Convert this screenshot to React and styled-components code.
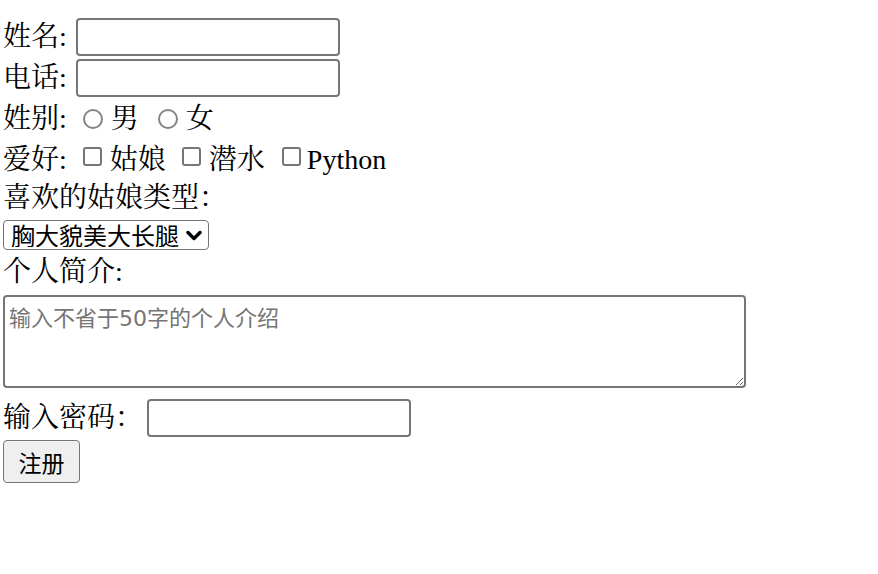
import styled, { createGlobalStyle } from "styled-components";

const GlobalStyle = createGlobalStyle`
  body {
    margin: 0;
    background: #fff;
  }
`;

const Form = styled.form`
  display: flex;
  flex-direction: column;
  align-items: flex-start;
  padding: 16px 3px 0;
  font-family: "Liberation Serif", "Noto Serif CJK SC", "Noto Sans CJK SC", serif;
  font-size: 28px;
  color: #000;
`;

const Line = styled.div`
  display: flex;
  align-items: center;
  height: ${(p) => p.$h}px;
  white-space: nowrap;
`;

const Label = styled.span`
  line-height: 1;
`;

const TextInput = styled.input`
  box-sizing: border-box;
  width: 264px;
  height: 38px;
  margin-left: ${(p) => p.$ml || 9}px;
  border: 2px solid #767676;
  border-radius: 4px;
  padding: 2px 4px;
  font-family: "Noto Sans CJK SC", sans-serif;
  font-size: 23px;
  background: #fff;
  outline: none;
`;

const Radio = styled.input.attrs({ type: "radio" })`
  appearance: none;
  box-sizing: border-box;
  width: 20px;
  height: 20px;
  margin: 0 8px 0 ${(p) => p.$ml}px;
  border: 2px solid #858585;
  border-radius: 50%;
  background: #fff;
  &:checked {
    background: radial-gradient(circle, #0075ff 0 40%, #fff 45%);
  }
`;

const Check = styled.input.attrs({ type: "checkbox" })`
  appearance: none;
  box-sizing: border-box;
  width: 19px;
  height: 19px;
  margin: -6px ${(p) => p.$mr || 8}px 0 ${(p) => p.$ml}px;
  border: 2px solid #767676;
  border-radius: 3px;
  background: #fff;
  &:checked {
    background: #0075ff;
    border-color: #0075ff;
  }
`;

const SelectBox = styled.label`
  display: flex;
  align-items: center;
  box-sizing: border-box;
  width: 206px;
  height: 30px;
  border: 1.75px solid #767676;
  border-radius: 4px;
  background: #fff;
  padding: 0 6px 0 7px;
`;

const Select = styled.select`
  appearance: none;
  flex: 1;
  border: none;
  background: transparent;
  padding: 0;
  font-family: "Noto Sans CJK SC", sans-serif;
  font-size: 24px;
  line-height: 1;
  color: #000;
  outline: none;
`;

const Chevron = styled.svg`
  width: 16px;
  height: 11px;
  flex: none;
`;

const TextArea = styled.textarea`
  box-sizing: border-box;
  width: 743px;
  height: 93px;
  margin: 5px 0 8px;
  border: 2px solid #767676;
  border-radius: 4px;
  padding: 3px 4px;
  font-family: "DejaVu Sans Mono", "Noto Sans CJK SC", monospace;
  font-size: 22px;
  outline: none;
  &::placeholder {
    color: #757575;
    font-family: "DejaVu Sans", "Noto Sans CJK SC", sans-serif;
  }
`;

const Button = styled.button`
  box-sizing: border-box;
  width: 77px;
  height: 43px;
  border: 1.75px solid #767676;
  border-radius: 4px;
  background: #efefef;
  font-family: "Noto Sans CJK SC", sans-serif;
  font-size: 23px;
  color: #000;
  padding: 0;
`;

export default function App() {
  return (
    <>
      <GlobalStyle />
      <Form onSubmit={(e) => e.preventDefault()}>
        <Line $h={41}>
          <Label>姓名:</Label>
          <TextInput type="text" name="name" />
        </Line>
        <Line $h={41}>
          <Label>电话:</Label>
          <TextInput type="text" name="phone" />
        </Line>
        <Line $h={41}>
          <Label>姓别:</Label>
          <Radio name="sex" value="male" $ml={16} />
          <Label>男</Label>
          <Radio name="sex" value="female" $ml={19} />
          <Label>女</Label>
        </Line>
        <Line $h={41}>
          <Label>爱好:</Label>
          <Check name="hobby" value="girl" $ml={16} />
          <Label>姑娘</Label>
          <Check name="hobby" value="dive" $ml={16} />
          <Label>潜水</Label>
          <Check name="hobby" value="python" $ml={17} $mr={6} />
          <Label>Python</Label>
        </Line>
        <Line $h={36}>
          <Label>喜欢的姑娘类型：</Label>
        </Line>
        <Line $h={38}>
          <SelectBox>
            <Select name="type" defaultValue="1">
              <option value="1">胸大貌美大长腿</option>
              <option value="2">温柔贤惠</option>
              <option value="3">活泼开朗</option>
            </Select>
            <Chevron viewBox="0 0 16 11">
              <path d="M2 2.5 L8 8.5 L14 2.5" fill="none" stroke="#000" strokeWidth="3.4" strokeLinecap="round" strokeLinejoin="round" />
            </Chevron>
          </SelectBox>
        </Line>
        <Line $h={36}>
          <Label>个人简介:</Label>
        </Line>
        <TextArea name="intro" placeholder="输入不省于50字的个人介绍" />
        <Line $h={44}>
          <Label>输入密码：</Label>
          <TextInput type="password" name="pwd" $ml={4} />
        </Line>
        <Button type="submit">注册</Button>
      </Form>
    </>
  );
}
